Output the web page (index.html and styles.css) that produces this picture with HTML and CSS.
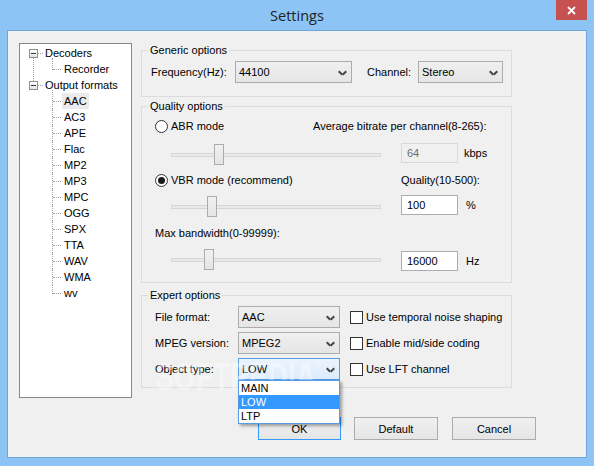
FILE: index.html
```html
<!DOCTYPE html>
<html lang="en">
<head>
    <meta charset="UTF-8">
    <title>Settings</title>
    <link rel="stylesheet" href="styles.css">
</head>
<body>

<div class="window">
    <div class="titlebar">
        <span class="title">Settings</span>
        <div class="close">
            <svg width="9" height="9" viewBox="0 0 9 9"><path d="M1 1 L8 8 M8 1 L1 8" stroke="#fff" stroke-width="1.8"/></svg>
        </div>
    </div>

    <div class="client">
        <!-- codec tree -->
        <ul class="tree">
            <li class="node">
                <div class="row"><span class="exp"></span><span class="dash"></span><span class="label">Decoders</span></div>
                <ul class="kids">
                    <li><span class="label">Recorder</span></li>
                </ul>
            </li>
            <li class="node">
                <div class="row"><span class="exp"></span><span class="dash"></span><span class="label">Output formats</span></div>
                <ul class="kids">
                    <li class="sel"><span class="label">AAC</span></li>
                    <li><span class="label">AC3</span></li>
                    <li><span class="label">APE</span></li>
                    <li><span class="label">Flac</span></li>
                    <li><span class="label">MP2</span></li>
                    <li><span class="label">MP3</span></li>
                    <li><span class="label">MPC</span></li>
                    <li><span class="label">OGG</span></li>
                    <li><span class="label">SPX</span></li>
                    <li><span class="label">TTA</span></li>
                    <li><span class="label">WAV</span></li>
                    <li><span class="label">WMA</span></li>
                    <li><span class="label">wv</span></li>
                </ul>
            </li>
        </ul>

        <div class="panel">
            <div class="group generic">
                <span class="legend">Generic options</span>
                <div class="line">
                    <span class="lbl-freq">Frequency(Hz):</span>
                    <div class="combo w-freq"><span>44100</span><i class="chev"></i></div>
                    <span class="lbl-chan">Channel:</span>
                    <div class="combo w-chan"><span>Stereo</span><i class="chev"></i></div>
                </div>
            </div>

            <div class="group quality">
                <span class="legend">Quality options</span>

                <div class="q-row">
                    <label class="radio abr"><span class="circle"></span>ABR mode</label>
                    <span>Average bitrate per channel(8-265):</span>
                </div>
                <div class="q-ctrl r1">
                    <div class="slider"><div class="track"></div><div class="thumb" style="left: 43px"></div></div>
                    <div class="edit disabled">64</div>
                    <span class="unit u-kbps">kbps</span>
                </div>

                <div class="q-row r2">
                    <label class="radio vbr"><span class="circle checked"></span>VBR mode (recommend)</label>
                    <span>Quality(10-500):</span>
                </div>
                <div class="q-ctrl r3">
                    <div class="slider"><div class="track"></div><div class="thumb" style="left: 36px"></div></div>
                    <div class="edit">100</div>
                    <span class="unit">%</span>
                </div>

                <div class="q-row r4">
                    <span>Max bandwidth(0-99999):</span>
                </div>
                <div class="q-ctrl r5">
                    <div class="slider"><div class="track"></div><div class="thumb" style="left: 33px"></div></div>
                    <div class="edit">16000</div>
                    <span class="unit">Hz</span>
                </div>
            </div>

            <div class="group expert">
                <span class="legend">Expert options</span>
                <div class="e-row">
                    <span class="e-lbl">File format:</span>
                    <div class="combo w-exp"><span>AAC</span><i class="chev"></i></div>
                    <label class="check"><span class="box"></span>Use temporal noise shaping</label>
                </div>
                <div class="e-row">
                    <span class="e-lbl">MPEG version:</span>
                    <div class="combo w-exp"><span>MPEG2</span><i class="chev"></i></div>
                    <label class="check"><span class="box"></span>Enable mid/side coding</label>
                </div>
                <div class="e-row">
                    <span class="e-lbl">Object type:</span>
                    <div class="combo-wrap">
                        <div class="combo w-exp focus"><span>LOW</span><i class="chev"></i></div>
                        <ul class="droplist">
                            <li>MAIN</li>
                            <li class="hi">LOW</li>
                            <li>LTP</li>
                        </ul>
                    </div>
                    <label class="check"><span class="box"></span>Use LFT channel</label>
                </div>
            </div>

            <div class="buttons">
                <button class="btn default-btn">OK</button>
                <button class="btn">Default</button>
                <button class="btn">Cancel</button>
            </div>
        </div>

        <div class="watermark">SOFTPEDIA<sup>®</sup></div>
    </div>
</div>

</body>
</html>
```

FILE: styles.css
```css
* {
    margin: 0;
    padding: 0;
    box-sizing: border-box;
}
body {
    font-family: "Liberation Sans", Arial, sans-serif;
    font-size: 11px;
    color: #000;
    background: #8cc4f6;
}
ul {
    list-style: none;
}

.window {
    width: 594px;
    height: 466px;
    background: #8cc4f6;
    display: flex;
    flex-direction: column;
}
.titlebar {
    height: 31px;
    position: relative;
    display: flex;
    justify-content: center;
    align-items: center;
}
.title {
    font-family: "Open Sans", "Noto Sans", sans-serif;
    font-size: 14.5px;
    color: #222;
    margin-top: -1px;
}
.close {
    position: absolute;
    top: 0;
    right: 7px;
    width: 31px;
    height: 20px;
    background: #c75050;
    display: flex;
    justify-content: center;
    align-items: center;
}

.client {
    position: relative;
    margin: 0 8px;
    height: 426px;
    background: #f0f0f0;
    box-shadow: 0 0 0 1px #6fa6da;
    display: flex;
    align-items: flex-start;
    padding: 12px 0 0 11px;
}

/* tree view */
.tree {
    width: 113px;
    height: 355px;
    background: #fff;
    border: 1px solid #828790;
    padding-top: 1px;
    line-height: 16px;
}
.tree > li {
    position: relative;
}
.tree > li:first-child::after {
    content: "";
    position: absolute;
    left: 13px;
    top: 8px;
    height: 32px;
    border-left: 1px dotted #a0a0a0;
}
.row {
    display: flex;
    align-items: center;
    height: 16px;
    padding-left: 9px;
}
.exp {
    position: relative;
    z-index: 1;
    width: 9px;
    height: 9px;
    border: 1px solid #919191;
    background: linear-gradient(#fff, #e3e3e3);
}
.exp::after {
    content: "";
    position: absolute;
    left: 1px;
    top: 3px;
    width: 5px;
    height: 1px;
    background: #3a3a3a;
}
.dash {
    width: 5px;
    border-top: 1px dotted #a0a0a0;
}
.label {
    padding: 0 2px;
    display: inline-block;
    height: 16px;
}
.kids li {
    position: relative;
    height: 16px;
    padding-left: 42px;
}
.kids li::before {
    content: "";
    position: absolute;
    left: 33px;
    top: 8px;
    width: 8px;
    border-top: 1px dotted #a0a0a0;
}
.kids li::after {
    content: "";
    position: absolute;
    left: 32px;
    top: 0;
    height: 16px;
    border-left: 1px dotted #a0a0a0;
}
.kids li:first-child::after {
    top: -3px;
    height: 19px;
}
.kids li:last-child::after {
    height: 9px;
}
.kids li:only-child::after {
    height: 12px;
}
.kids li.sel .label {
    background: #ebebeb;
}

/* right side */
.panel {
    width: 371px;
    margin-left: 9px;
}
.group {
    position: relative;
    border: 1px solid #dcdcdc;
}
.legend {
    position: absolute;
    top: -7px;
    left: 6px;
    padding: 0 2px;
    line-height: 13px;
    background: #f0f0f0;
}
.generic {
    margin-top: 7px;
    height: 47px;
    padding: 10px 0 0 9px;
}
.line {
    display: flex;
    align-items: center;
}
.lbl-freq {
    width: 84px;
}
.lbl-chan {
    width: 51px;
    margin-left: 15px;
}
.w-freq {
    width: 117px;
}
.w-chan {
    width: 85px;
}

.combo {
    display: flex;
    align-items: center;
    justify-content: space-between;
    height: 22px;
    border: 1px solid #acacac;
    background: linear-gradient(#f0f0f0, #e5e5e5);
    padding: 0 4px 0 3px;
}
.combo.focus {
    border-color: #569de5;
    background: linear-gradient(#ecf4fc, #dcecfc);
}
.chev {
    width: 8px;
    height: 5px;
    position: relative;
}
.chev::before,
.chev::after {
    content: "";
    position: absolute;
    top: 2px;
    width: 5px;
    height: 2px;
    background: #444;
}
.chev::before {
    left: -1px;
    transform: rotate(45deg);
}
.chev::after {
    left: 3px;
    transform: rotate(-45deg);
}

.quality {
    margin-top: 9px;
    height: 177px;
    padding: 11px 0 0 13px;
}
.q-row {
    display: flex;
    align-items: center;
    height: 16px;
}
.radio {
    display: flex;
    align-items: center;
}
.abr {
    width: 158px;
}
.vbr {
    width: 246px;
}
.circle {
    position: relative;
    width: 13px;
    height: 13px;
    border: 1px solid #333;
    border-radius: 50%;
    background: #fff;
    margin-right: 3px;
}
.circle.checked::after {
    content: "";
    position: absolute;
    left: 2px;
    top: 2px;
    width: 7px;
    height: 7px;
    border-radius: 50%;
    background: #1b1b1b;
}
.q-ctrl {
    display: flex;
    align-items: flex-start;
    height: 23px;
    padding-left: 16px;
}
.r1 {
    margin-top: 9px;
}
.r2 {
    margin-top: 6px;
}
.r3 {
    margin-top: 7px;
}
.r4 {
    margin-top: 7px;
}
.r5 {
    margin-top: 8px;
}
.r5 .slider {
    margin-top: 0;
}
.r5 .edit,
.r5 .unit {
    margin-top: 2px;
}
.slider {
    position: relative;
    width: 210px;
    height: 21px;
    margin-top: 1px;
}
.track {
    position: absolute;
    left: 0;
    right: 0;
    top: 9px;
    height: 4px;
    border: 1px solid #d6d6d6;
    background: #e7eaea;
}
.thumb {
    position: absolute;
    top: 0;
    width: 10px;
    height: 21px;
    border: 1px solid #acacac;
    background: linear-gradient(#f0f0f0, #e5e5e5);
}
.edit {
    width: 57px;
    height: 20px;
    margin-left: 20px;
    border: 1px solid #abadb3;
    background: #fff;
    line-height: 18px;
    padding-left: 5px;
}
.edit.disabled {
    border-color: #d9d9d9;
    background: #f0f0f0;
    color: #6d6d6d;
}
.unit {
    line-height: 20px;
    margin-left: 8px;
}
.u-kbps {
    margin-left: 6px;
}

.expert {
    margin-top: 12px;
    height: 93px;
    padding: 10px 0 0 13px;
}
.e-row {
    display: flex;
    align-items: center;
    height: 22px;
    margin-bottom: 4px;
}
.e-lbl {
    width: 83px;
}
.w-exp {
    width: 102px;
}
.combo-wrap {
    position: relative;
}
.check {
    display: flex;
    align-items: center;
    margin-left: 10px;
}
.box {
    width: 13px;
    height: 13px;
    border: 1px solid #333;
    background: #fff;
    margin-right: 3px;
}
.droplist {
    position: absolute;
    z-index: 5;
    top: 22px;
    left: 0;
    width: 102px;
    border: 1px solid #569de5;
    background: #fff;
    box-shadow: 2px 2px 3px rgba(0, 0, 0, 0.35);
}
.droplist li {
    height: 14px;
    line-height: 14px;
    padding-left: 2px;
}
.droplist li.hi {
    background: #3399ff;
    color: #fff;
}

.buttons {
    display: flex;
    gap: 13px;
    margin-top: 29px;
    padding-left: 117px;
}
.btn {
    flex: none;
    width: 84px;
    height: 23px;
    border: 1px solid #acacac;
    background: linear-gradient(#f0f0f0, #e5e5e5);
    font-family: "Liberation Sans", Arial, sans-serif;
    font-size: 11px;
    color: #000;
}
.default-btn {
    width: 83px;
    border-color: #3399ff;
}
.btn + .btn + .btn {
    margin-left: 1px;
}

.watermark {
    position: absolute;
    z-index: 3;
    left: 147px;
    top: 315px;
    font-family: "Liberation Sans", Arial, sans-serif;
    font-weight: bold;
    font-size: 38px;
    line-height: 38px;
    transform: scaleX(0.74);
    transform-origin: left top;
    color: rgba(255, 255, 255, 0.4);
    pointer-events: none;
}
.watermark sup {
    font-size: 10px;
    vertical-align: 22px;
}
```
